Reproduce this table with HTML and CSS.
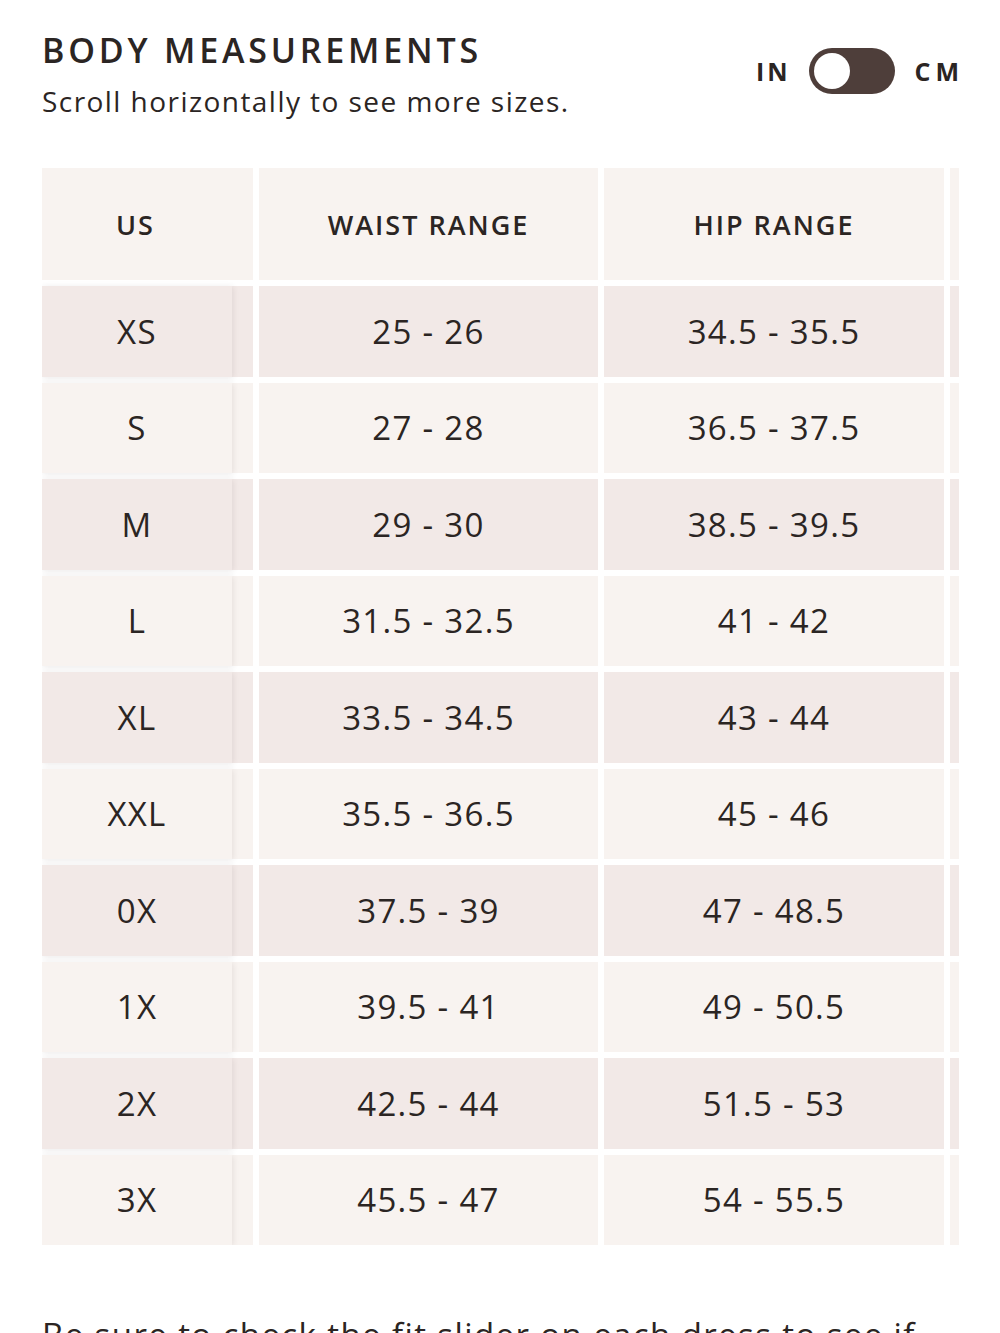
FILE: index.html
```html
<!DOCTYPE html>
<html>
<head>
<meta charset="utf-8">
<link rel="stylesheet" href="styles.css">
</head>
<body>
<div class="page">
  <div class="header">
    <div class="titles">
      <h1 class="title">BODY MEASUREMENTS</h1>
      <p class="subtitle">Scroll horizontally to see more sizes.</p>
    </div>
    <div class="units">
      <span class="unit">IN</span>
      <span class="switch"><span class="knob"></span></span>
      <span class="unit unit-cm">CM</span>
    </div>
  </div>

  <div class="table-wrap">
    <div class="grid">
      <div class="cell head first">US</div>
      <div class="cell head">WAIST RANGE</div>
      <div class="cell head">HIP RANGE</div>
      <div class="cell head"></div>

      <div class="cell odd first"><span class="sticky">XS</span></div>
      <div class="cell odd">25 - 26</div>
      <div class="cell odd">34.5 - 35.5</div>
      <div class="cell odd"></div>

      <div class="cell even first"><span class="sticky">S</span></div>
      <div class="cell even">27 - 28</div>
      <div class="cell even">36.5 - 37.5</div>
      <div class="cell even"></div>

      <div class="cell odd first"><span class="sticky">M</span></div>
      <div class="cell odd">29 - 30</div>
      <div class="cell odd">38.5 - 39.5</div>
      <div class="cell odd"></div>

      <div class="cell even first"><span class="sticky">L</span></div>
      <div class="cell even">31.5 - 32.5</div>
      <div class="cell even">41 - 42</div>
      <div class="cell even"></div>

      <div class="cell odd first"><span class="sticky">XL</span></div>
      <div class="cell odd">33.5 - 34.5</div>
      <div class="cell odd">43 - 44</div>
      <div class="cell odd"></div>

      <div class="cell even first"><span class="sticky">XXL</span></div>
      <div class="cell even">35.5 - 36.5</div>
      <div class="cell even">45 - 46</div>
      <div class="cell even"></div>

      <div class="cell odd first"><span class="sticky">0X</span></div>
      <div class="cell odd">37.5 - 39</div>
      <div class="cell odd">47 - 48.5</div>
      <div class="cell odd"></div>

      <div class="cell even first"><span class="sticky">1X</span></div>
      <div class="cell even">39.5 - 41</div>
      <div class="cell even">49 - 50.5</div>
      <div class="cell even"></div>

      <div class="cell odd first"><span class="sticky">2X</span></div>
      <div class="cell odd">42.5 - 44</div>
      <div class="cell odd">51.5 - 53</div>
      <div class="cell odd"></div>

      <div class="cell even first"><span class="sticky">3X</span></div>
      <div class="cell even">45.5 - 47</div>
      <div class="cell even">54 - 55.5</div>
      <div class="cell even"></div>
    </div>
  </div>

  <p class="note">Be sure to check the fit slider on each dress to see if</p>
</div>
</body>
</html>
```

FILE: styles.css
```css
html, body {
  margin: 0;
  padding: 0;
  background: #ffffff;
}

body {
  font-family: "Open Sans", "Noto Sans", sans-serif;
  color: #2b2523;
  overflow: hidden;
}

.page {
  padding: 27px 41px 0 42px;
}

.header {
  display: flex;
  justify-content: space-between;
  align-items: flex-start;
}

.title {
  margin: 0;
  font-size: 34px;
  font-weight: 600;
  letter-spacing: 3.8px;
  line-height: 46px;
}

.subtitle {
  margin: 9px 0 0 0;
  font-size: 28px;
  font-weight: 400;
  letter-spacing: 1.45px;
  line-height: 38px;
}

.units {
  display: flex;
  align-items: center;
  gap: 19px;
  margin-top: 21px;
}

.unit {
  font-size: 25px;
  font-weight: 700;
  letter-spacing: 3px;
}

.unit-cm {
  letter-spacing: 5px;
  margin-right: -5px;
}

.switch {
  position: relative;
  display: block;
  width: 86px;
  height: 46px;
  border-radius: 23px;
  background: #4e3e3a;
}

.knob {
  position: absolute;
  left: 5px;
  top: 5px;
  width: 36px;
  height: 36px;
  border-radius: 50%;
  background: #ffffff;
}

.table-wrap {
  margin-top: 48px;
  overflow: hidden;
  width: 917px;
}

.grid {
  display: grid;
  grid-template-columns: 211px 339px 340px 340px;
  grid-template-rows: 112px;
  grid-auto-rows: 90.5px;
  gap: 6px;
  width: max-content;
}

.cell {
  display: flex;
  align-items: center;
  justify-content: center;
  font-size: 33px;
  letter-spacing: 1.3px;
  white-space: nowrap;
}

.head {
  background: #f8f3f0;
  font-size: 27px;
  font-weight: 600;
  letter-spacing: 2px;
}

.odd {
  background: #f2e9e7;
}

.even {
  background: #f8f3f0;
}

.first {
  position: relative;
}

.head.first {
  justify-content: flex-start;
  padding-left: 74px;
}

.sticky {
  position: absolute;
  left: 0;
  top: 0;
  width: 190px;
  height: 100%;
  display: flex;
  align-items: center;
  justify-content: center;
  background: inherit;
  box-shadow: 1px 1px 6px rgba(60, 40, 35, 0.10);
  z-index: 1;
}

.note {
  margin: 68px 0 0 0;
  font-size: 33px;
  letter-spacing: 1.4px;
  line-height: 44px;
  white-space: nowrap;
}
```
